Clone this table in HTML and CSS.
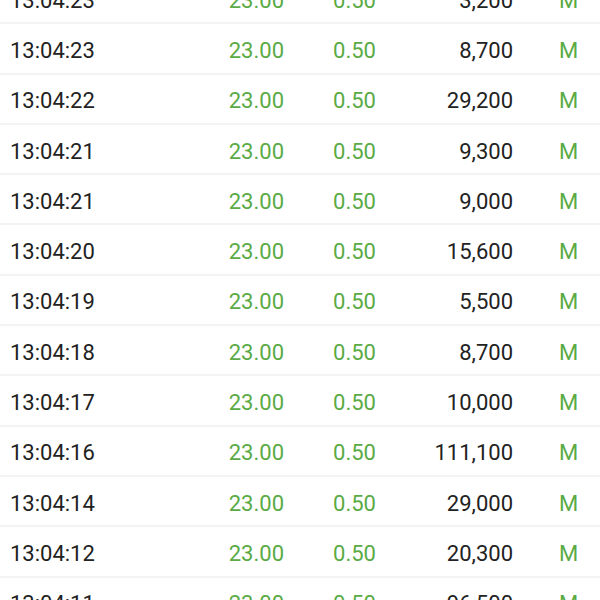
FILE: index.html
```html
<!DOCTYPE html>
<html>
<head>
<meta charset="utf-8">
<link rel="stylesheet" href="styles.css">
</head>
<body>
<div class="list">
  <div class="row"><span class="time">13:04:23</span><span class="price">23.00</span><span class="chg">0.50</span><span class="vol">3,200</span><span class="side">M</span></div>
  <div class="row"><span class="time">13:04:23</span><span class="price">23.00</span><span class="chg">0.50</span><span class="vol">8,700</span><span class="side">M</span></div>
  <div class="row"><span class="time">13:04:22</span><span class="price">23.00</span><span class="chg">0.50</span><span class="vol">29,200</span><span class="side">M</span></div>
  <div class="row"><span class="time">13:04:21</span><span class="price">23.00</span><span class="chg">0.50</span><span class="vol">9,300</span><span class="side">M</span></div>
  <div class="row"><span class="time">13:04:21</span><span class="price">23.00</span><span class="chg">0.50</span><span class="vol">9,000</span><span class="side">M</span></div>
  <div class="row"><span class="time">13:04:20</span><span class="price">23.00</span><span class="chg">0.50</span><span class="vol">15,600</span><span class="side">M</span></div>
  <div class="row"><span class="time">13:04:19</span><span class="price">23.00</span><span class="chg">0.50</span><span class="vol">5,500</span><span class="side">M</span></div>
  <div class="row"><span class="time">13:04:18</span><span class="price">23.00</span><span class="chg">0.50</span><span class="vol">8,700</span><span class="side">M</span></div>
  <div class="row"><span class="time">13:04:17</span><span class="price">23.00</span><span class="chg">0.50</span><span class="vol">10,000</span><span class="side">M</span></div>
  <div class="row"><span class="time">13:04:16</span><span class="price">23.00</span><span class="chg">0.50</span><span class="vol">111,100</span><span class="side">M</span></div>
  <div class="row"><span class="time">13:04:14</span><span class="price">23.00</span><span class="chg">0.50</span><span class="vol">29,000</span><span class="side">M</span></div>
  <div class="row"><span class="time">13:04:12</span><span class="price">23.00</span><span class="chg">0.50</span><span class="vol">20,300</span><span class="side">M</span></div>
  <div class="row"><span class="time">13:04:11</span><span class="price">23.00</span><span class="chg">0.50</span><span class="vol">96,500</span><span class="side">M</span></div>
</div>
</body>
</html>
```
FILE: styles.css
```css
html, body {
  margin: 0;
  padding: 0;
  background: #ffffff;
  overflow: hidden;
}
.list {
  margin-top: -26px;
  font-family: Roboto, "Noto Sans", sans-serif;
  font-size: 22px;
}
.row {
  display: grid;
  grid-template-columns: 190px 84px 92px 137px 1fr;
  align-items: center;
  height: 44.3px;
  padding-top: 4px;
  padding-left: 10px;
  border-bottom: 2px solid #f3f3f3;
  color: #222222;
}
.price, .chg, .vol {
  text-align: right;
}
.price, .chg, .side {
  color: #5aaa45;
}
.side {
  padding-left: 46px;
}
```
